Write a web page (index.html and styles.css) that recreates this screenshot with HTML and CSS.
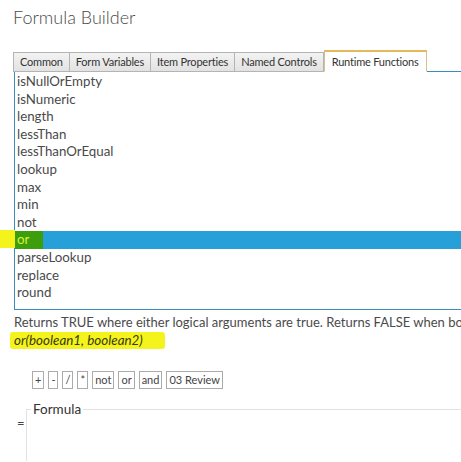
FILE: index.html
```html
<!DOCTYPE html>
<html lang="en">
<head>
    <meta charset="UTF-8">
    <title>Formula Builder</title>
    <link rel="stylesheet" href="styles.css">
</head>
<body>
    <h1 class="title">Formula Builder</h1>

    <div class="tabs">
        <span class="tab">Common</span>
        <span class="tab">Form Variables</span>
        <span class="tab">Item Properties</span>
        <span class="tab">Named Controls</span>
        <span class="tab active">Runtime Functions</span>
    </div>

    <div class="fn-list">
        <div class="fn">isNullOrEmpty</div>
        <div class="fn">isNumeric</div>
        <div class="fn">length</div>
        <div class="fn">lessThan</div>
        <div class="fn">lessThanOrEqual</div>
        <div class="fn">lookup</div>
        <div class="fn">max</div>
        <div class="fn">min</div>
        <div class="fn">not</div>
        <div class="fn selected"><span class="marked">or</span></div>
        <div class="fn">parseLookup</div>
        <div class="fn">replace</div>
        <div class="fn">round</div>
    </div>

    <p class="desc">Returns TRUE where either logical arguments are true. Returns FALSE when both arguments are false.</p>
    <p class="sig"><mark>or(boolean1, boolean2)</mark></p>

    <div class="ops">
        <button class="op">+</button>
        <button class="op">-</button>
        <button class="op">/</button>
        <button class="op">*</button>
        <button class="op">not</button>
        <button class="op">or</button>
        <button class="op">and</button>
        <button class="op">03 Review</button>
    </div>

    <div class="formula-row">
        <span class="eq">=</span>
        <fieldset class="formula">
            <legend>Formula</legend>
        </fieldset>
    </div>
</body>
</html>
```

FILE: styles.css
```css
* {
    box-sizing: border-box;
}

body {
    margin: 0;
    width: 461px;
    height: 462px;
    overflow: hidden;
    font-family: Lato, "Open Sans", sans-serif;
    color: #444;
    background: #fff;
}

.title {
    margin: 0;
    padding: 5px 0 0 13px;
    height: 50px;
    font-size: 18px;
    font-weight: 300;
    color: #4a4a4a;
    line-height: 24px;
}

/* tab strip */
.tabs {
    display: flex;
    align-items: flex-end;
    margin-left: 13px;
    width: 600px;
    height: 22px;
    border-bottom: 1px solid #3a8cbc;
}

.tab {
    height: 20px;
    margin-bottom: -1px;
    padding: 0 6px;
    font-size: 11px;
    letter-spacing: -0.2px;
    line-height: 18px;
    color: #333;
    white-space: nowrap;
    background: linear-gradient(#f3f3f3, #e2e2e2);
    border: 1px solid #b4b4b4;
    border-left: none;
}

.tab:first-child {
    border-left: 1px solid #b4b4b4;
}

.tab.active {
    height: 22px;
    padding: 1px 7px 0;
    background: #fff;
    border: 1px solid #d9c08a;
    border-top: 2px solid #e6b85c;
    border-bottom-color: #fff;
}

/* function list */
.fn-list {
    margin-left: 14px;
    width: 600px;
    height: 238px;
    padding-top: 1px;
    border-left: 1px solid #3a8cbc;
    border-bottom: 1px solid #3a8cbc;
}

.fn {
    position: relative;
    height: 17.6px;
    padding-left: 2px;
    font-size: 13.3px;
    line-height: 17.6px;
    color: #4a4a4a;
}

.fn.selected {
    background: #27a0da;
}

.fn.selected::before {
    content: "";
    position: absolute;
    left: -15px;
    top: -1px;
    width: 15px;
    height: 18px;
    background: #f4f41c;
}

.marked {
    display: inline-block;
    width: 28px;
    margin-left: -2px;
    padding-left: 2px;
    background: #3c9e0c;
    color: #d8f23a;
}

.desc {
    margin: 4px 0 0 14px;
    font-size: 13px;
    line-height: 17px;
    white-space: nowrap;
    color: #4a4a4a;
}

.sig {
    margin: 1px 0 0 10px;
    font-size: 13.4px;
    line-height: 17px;
    font-style: italic;
}

.sig mark {
    display: inline-block;
    width: 155px;
    padding: 0 4px;
    background: #f4f41c;
    color: #3a3a10;
    border-radius: 3px;
}

/* operator buttons */
.ops {
    display: flex;
    gap: 4px;
    margin: 22px 0 0 32px;
}

.op {
    height: 18px;
    padding: 0 2px;
    font-family: inherit;
    font-size: 11px;
    line-height: 16px;
    color: #444;
    background: #fff;
    border: 1px solid #ababab;
    border-radius: 0;
}

/* formula box */
.formula-row {
    display: flex;
    align-items: flex-start;
    margin-top: 12px;
}

.eq {
    width: 26px;
    padding: 14px 0 0 17px;
    font-size: 13px;
    color: #444;
}

.formula {
    flex: 1;
    height: 60px;
    margin: 0;
    padding: 0;
    border: none;
    border-top: 1px solid #e2e2e2;
    border-left: 1px solid #e2e2e2;
}

.formula legend {
    margin-left: 4px;
    padding: 0 2px;
    font-size: 13.5px;
    color: #333;
}
```
